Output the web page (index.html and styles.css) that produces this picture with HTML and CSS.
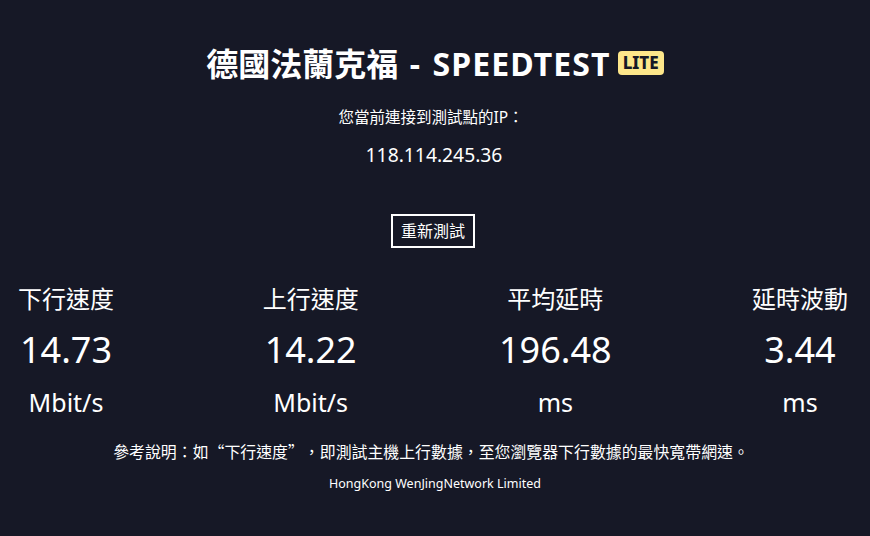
FILE: index.html
```html
<!DOCTYPE html>
<html lang="zh-Hant">
<head>
<meta charset="utf-8">
<title>SPEEDTEST LITE</title>
<link rel="stylesheet" href="styles.css">
</head>
<body>
<main class="page">
  <h1 class="title"><span class="title-text">德國法蘭克福<span class="title-latin"> - SPEEDTEST</span></span><span class="badge">LITE</span></h1>
  <p class="subtitle">您當前連接到測試點的IP：</p>
  <p class="ip">118.114.245.36</p>
  <div class="actions"><button class="retest">重新測試</button></div>
  <section class="stats">
    <div class="stat">
      <div class="stat-label">下行速度</div>
      <div class="stat-value">14.73</div>
      <div class="stat-unit">Mbit/s</div>
    </div>
    <div class="stat">
      <div class="stat-label">上行速度</div>
      <div class="stat-value">14.22</div>
      <div class="stat-unit">Mbit/s</div>
    </div>
    <div class="stat">
      <div class="stat-label">平均延時</div>
      <div class="stat-value">196.48</div>
      <div class="stat-unit">ms</div>
    </div>
    <div class="stat">
      <div class="stat-label">延時波動</div>
      <div class="stat-value">3.44</div>
      <div class="stat-unit">ms</div>
    </div>
  </section>
  <p class="note">參考說明：如“下行速度”，即測試主機上行數據，至您瀏覽器下行數據的最快寬帶網速。</p>
  <p class="footer">HongKong WenJingNetwork Limited</p>
</main>
</body>
</html>
```

FILE: styles.css
```css
html, body {
  margin: 0;
  padding: 0;
  background: #161826;
}
body {
  color: #ffffff;
  font-family: "Noto Sans", "Noto Sans CJK TC", sans-serif;
  width: 870px;
  height: 536px;
  overflow: hidden;
}
.page {
  display: flex;
  flex-direction: column;
  align-items: center;
  padding-top: 44px;
}
.title {
  margin: 0;
  font-size: 32px;
  line-height: 40px;
  font-weight: 700;
  display: flex;
  align-items: center;
  gap: 7px;
}
.title-text {
  white-space: pre;
}
.title-latin {
  letter-spacing: 1.1px;
  word-spacing: 2px;
}
.badge {
  background: #fde68a;
  color: #161826;
  font-size: 17px;
  line-height: 22px;
  font-weight: 800;
  padding: 1px 5px;
  border-radius: 4px;
  margin-top: -2px;
}
.subtitle {
  margin: 23px 0 0;
  font-size: 15.5px;
  line-height: 20px;
  padding-right: 8px;
}
.ip {
  margin: 16px 0 0;
  font-size: 19.3px;
  line-height: 24px;
  padding-right: 2px;
}
.actions {
  margin-top: 47px;
}
.retest {
  background: transparent;
  color: #ffffff;
  border: 2px solid #ffffff;
  font-family: "Noto Sans", "Noto Sans CJK TC", sans-serif;
  font-size: 16px;
  line-height: 18px;
  padding: 6px 8px;
  margin-right: 4px;
  cursor: pointer;
}
.stats {
  align-self: stretch;
  display: flex;
  justify-content: space-between;
  padding: 0 22px 0 18px;
  margin-top: 36px;
}
.stat {
  display: flex;
  flex-direction: column;
  align-items: center;
  width: 96px;
}
.stat-label {
  font-size: 24px;
  line-height: 30px;
  white-space: nowrap;
}
.stat-value {
  margin-top: 14px;
  font-size: 36px;
  line-height: 44px;
  white-space: nowrap;
}
.stat-unit {
  margin-top: 15px;
  font-size: 25px;
  line-height: 30px;
  white-space: nowrap;
}
.note {
  margin: 25px 0 0;
  font-family: "Noto Sans CJK TC", sans-serif;
  font-feature-settings: "fwid" 1;
  text-spacing-trim: space-all;
  font-size: 15.9px;
  line-height: 20px;
  white-space: nowrap;
  padding-right: 8px;
}
.footer {
  margin: 13px 0 0;
  font-size: 12.5px;
  line-height: 18px;
}
```
